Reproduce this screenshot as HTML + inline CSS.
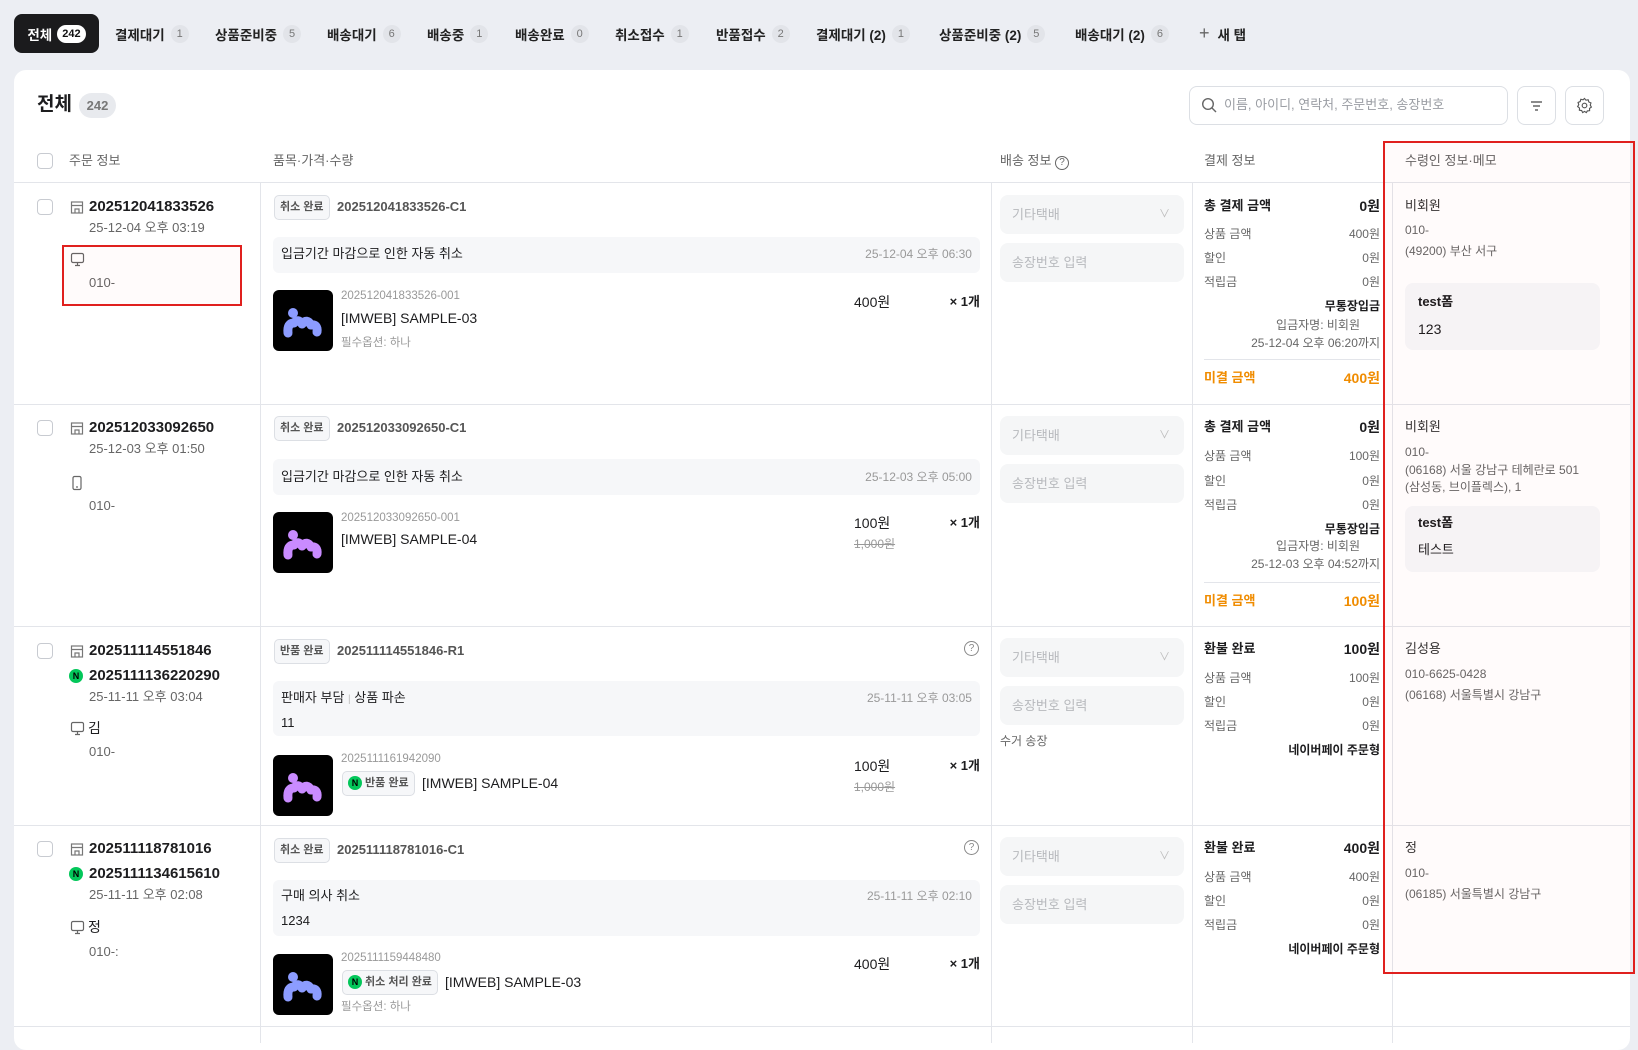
<!DOCTYPE html>
<html><head><meta charset="utf-8"><style>
*{box-sizing:border-box;margin:0;padding:0}
body{width:1638px;height:1030px;overflow:hidden;background:#eceef3;font-family:"Liberation Sans","Noto Sans CJK KR",sans-serif;color:#1d1d1f;position:relative}
.a{position:absolute;white-space:nowrap;line-height:20px}
.tab{position:absolute;top:14px;height:39px;display:flex;align-items:center;font-size:13.5px;font-weight:700;color:#222}
.cnt{display:inline-block;margin-left:6px;min-width:18px;height:18px;border-radius:9px;background:#e2e4e9;color:#777;font-size:11px;font-weight:400;text-align:center;line-height:18px;padding:0 5px}
.card{position:absolute;left:14px;top:70px;width:1616px;height:980px;background:#fff;border-radius:12px}
.hl{position:absolute;height:1px;background:#e3e5ea;left:14px;width:1616px}
.vl{position:absolute;width:1px;background:#e3e5ea;top:183px;height:860px}
.cb{position:absolute;width:16px;height:16px;border:1.5px solid #c8cbd1;border-radius:4px;background:#fff}
.g{color:#666}.lg{color:#999}
.s13{font-size:13px}.s12{font-size:12px}.s11{font-size:11.5px}.s14{font-size:14px}
.b{font-weight:700}
.badge{position:absolute;height:25px;border:1px solid #dcdfe4;background:#f6f7f9;border-radius:5px;font-size:11px;font-weight:700;color:#555;line-height:23px;padding:0 5px;white-space:nowrap}
.rbox{position:absolute;left:273px;width:707px;background:#f6f7f9;border-radius:6px}
.thumb{position:absolute;left:273px;width:60px;height:61px;background:#000;border-radius:6px;overflow:hidden}
.sel{position:absolute;left:1000px;width:184px;height:39px;background:#f5f6f7;border-radius:8px;font-size:13px;color:#b7b9bd;line-height:39px;padding-left:12px}
.r{text-align:right}
.n{display:inline-block;width:14px;height:14px;border-radius:7px;background:#03c75a;color:#000;font-size:9px;font-weight:700;text-align:center;line-height:14px;vertical-align:middle}
.memo{position:absolute;left:1405px;width:195px;background:#f6f7f9;border-radius:8px}
.or{color:#f08c00}
.ic{position:absolute}
</style></head><body>

<div class="tab" style="left:14px;width:85px;background:#1b1b1d;border-radius:8px;color:#fff;justify-content:center">전체<span class="cnt" style="background:#fff;color:#111;font-weight:700;margin-left:5px">242</span></div>
<div class="tab" style="left:115px">결제대기<span class="cnt">1</span></div>
<div class="tab" style="left:215px">상품준비중<span class="cnt">5</span></div>
<div class="tab" style="left:327px">배송대기<span class="cnt">6</span></div>
<div class="tab" style="left:427px">배송중<span class="cnt">1</span></div>
<div class="tab" style="left:515px">배송완료<span class="cnt">0</span></div>
<div class="tab" style="left:615px">취소접수<span class="cnt">1</span></div>
<div class="tab" style="left:716px">반품접수<span class="cnt">2</span></div>
<div class="tab" style="left:816px">결제대기 (2)<span class="cnt">1</span></div>
<div class="tab" style="left:939px">상품준비중 (2)<span class="cnt">5</span></div>
<div class="tab" style="left:1075px">배송대기 (2)<span class="cnt">6</span></div>
<div class="tab" style="left:1199px;font-weight:700"><span style="font-size:18px;font-weight:400;color:#666;margin-right:8px">+</span>새 탭</div>

<div class="card"></div>
<div class="a b" style="left:37px;top:93px;font-size:19px;line-height:24px">전체</div>
<div class="a" style="left:79px;top:93px;width:37px;height:25px;border-radius:13px;background:#e8eaee;color:#777;font-size:13px;line-height:25px;text-align:center;font-weight:700">242</div>

<div class="a" style="left:1189px;top:86px;width:319px;height:39px;border:1px solid #dcdfe4;border-radius:8px"></div>
<svg class="ic" style="left:1201px;top:97px" width="17" height="17" viewBox="0 0 17 17"><circle cx="7" cy="7" r="5.3" fill="none" stroke="#666" stroke-width="1.4"/><path d="M11 11l4 4" stroke="#666" stroke-width="1.4"/></svg>
<div class="a s13" style="left:1224px;top:95px;color:#9a9da3">이름, 아이디, 연락처, 주문번호, 송장번호</div>
<div class="a" style="left:1517px;top:86px;width:39px;height:39px;border:1px solid #dcdfe4;border-radius:8px"></div>
<svg class="ic" style="left:1528px;top:97px" width="17" height="17"><path d="M3 5h11M5 9h7M7 13h3" stroke="#666" stroke-width="1.4"/></svg>
<div class="a" style="left:1565px;top:86px;width:39px;height:39px;border:1px solid #dcdfe4;border-radius:8px"></div>
<svg class="ic" style="left:1576px;top:97px" width="17" height="17" viewBox="0 0 24 24"><path d="M12 2l2 2.5 3.2-.6.9 3.1 3 1.3-1 3.1 1.6 2.8-2.6 1.9.1 3.2-3.2.4L14.6 22 12 20.3 9.4 22l-1.4-2.9-3.2-.4.1-3.2L2.3 13.6l1.6-2.8-1-3.1 3-1.3.9-3.1 3.2.6z" fill="none" stroke="#555" stroke-width="1.6"/><circle cx="12" cy="12" r="3.3" fill="none" stroke="#555" stroke-width="1.6"/></svg>

<div class="cb" style="left:37px;top:153px"></div>
<div class="a s13 g" style="left:69px;top:151px">주문 정보</div>
<div class="a s13 g" style="left:273px;top:151px">품목·가격·수량</div>
<div class="a s13 g" style="left:1000px;top:151px">배송 정보 <span style="display:inline-block;width:14px;height:14px;border:1.3px solid #666;border-radius:50%;font-size:10px;line-height:12px;text-align:center;vertical-align:0px">?</span></div>
<div class="a s13 g" style="left:1204px;top:151px">결제 정보</div>
<div class="a s13 g" style="left:1405px;top:151px">수령인 정보·메모</div>

<div class="hl" style="top:182px"></div>
<div class="hl" style="top:404px"></div>
<div class="hl" style="top:626px"></div>
<div class="hl" style="top:825px"></div>
<div class="hl" style="top:1026px"></div>
<div class="vl" style="left:260px"></div>
<div class="vl" style="left:991px"></div>
<div class="vl" style="left:1192px"></div>
<div class="vl" style="left:1392px"></div>

<!-- ROW 1 -->
<div style="position:absolute;left:0;top:183px;width:1638px">
<div class="cb" style="left:37px;top:16px"></div>
<svg class="ic" style="left:70px;top:17px" width="14" height="14"><rect x="1.5" y="2" width="11" height="11" fill="none" stroke="#777" stroke-width="1.2"/><path d="M1.5 5.5h11M5 13V9h4v4" stroke="#777" stroke-width="1.2" fill="none"/></svg>
<div class="a b" style="left:89px;top:14px;font-size:15px">202512041833526</div>
<div class="a s13 g" style="left:89px;top:35px">25-12-04 오후 03:19</div>
<svg class="ic" style="left:70px;top:69px" width="15" height="15"><rect x="1.5" y="1.5" width="12" height="9" rx="1.5" fill="none" stroke="#666" stroke-width="1.2"/><path d="M7.5 10.5v3M5 13.5h5" stroke="#666" stroke-width="1.2"/></svg>
<div class="a s13 g" style="left:89px;top:90px">010-</div>

<div class="badge" style="left:274px;top:12px">취소 완료</div>
<div class="a s13" style="left:337px;top:14px;color:#555;font-weight:700">202512041833526-C1</div>
<div class="rbox" style="top:54px;height:36px"></div>
<div class="a s13" style="left:281px;top:61px">입금기간 마감으로 인한 자동 취소</div>
<div class="a s12 lg r" style="left:780px;width:192px;top:61px">25-12-04 오후 06:30</div>
<div class="thumb" style="top:107px"><svg width="60" height="61"><circle cx="20" cy="23" r="5" fill="#8c9cff"/><path d="M15 43Q14 33 21 33Q25 28 29 34Q34 28 38 35Q45 34 44 42" stroke="#8c9cff" stroke-width="9" fill="none" stroke-linecap="round" stroke-linejoin="round"/></svg></div>
<div class="a s11 lg" style="left:341px;top:103px">202512041833526-001</div>
<div class="a s14" style="left:341px;top:125px">[IMWEB] SAMPLE-03</div>
<div class="a s11 lg" style="left:341px;top:150px">필수옵션: 하나</div>
<div class="a s14" style="left:854px;top:109px">400원</div>
<div class="a s13 b r" style="left:900px;width:80px;top:109px">× 1개</div>

<div class="sel" style="top:12px">기타택배<span style="position:absolute;right:14px;color:#bbb;font-size:11px">∨</span></div>
<div class="sel" style="top:60px">송장번호 입력</div>

<div class="a s13 b" style="left:1204px;top:13px">총 결제 금액</div><div class="a s14 b r" style="left:1280px;width:100px;top:13px">0원</div>
<div class="a s12 g" style="left:1204px;top:41px">상품 금액</div><div class="a s12 g r" style="left:1280px;width:100px;top:41px">400원</div>
<div class="a s12 g" style="left:1204px;top:65px">할인</div><div class="a s12 g r" style="left:1280px;width:100px;top:65px">0원</div>
<div class="a s12 g" style="left:1204px;top:89px">적립금</div><div class="a s12 g r" style="left:1280px;width:100px;top:89px">0원</div>
<div class="a s12 b r" style="left:1230px;width:150px;top:113px">무통장입금</div>
<div class="a s12 g r" style="left:1230px;width:130px;top:132px">입금자명: 비회원</div>
<div class="a s12 g r" style="left:1200px;width:180px;top:150px">25-12-04 오후 06:20까지</div>
<div class="a" style="left:1204px;top:176px;width:176px;height:1px;background:#e3e5ea"></div>
<div class="a s13 b or" style="left:1204px;top:185px">미결 금액</div><div class="a s14 b or r" style="left:1280px;width:100px;top:185px">400원</div>

<div class="a s13" style="left:1405px;top:13px;color:#333">비회원</div>
<div class="a s12 g" style="left:1405px;top:37px">010-</div>
<div class="a s12 g" style="left:1405px;top:58px">(49200) 부산 서구</div>
<div class="memo" style="top:100px;height:67px"></div>
<div class="a s13 b" style="left:1418px;top:109px">test폼</div>
<div class="a s14" style="left:1418px;top:136px">123</div>
</div>

<!-- ROW 2 -->
<div style="position:absolute;left:0;top:404px;width:1638px">
<div class="cb" style="left:37px;top:16px"></div>
<svg class="ic" style="left:70px;top:17px" width="14" height="14"><rect x="1.5" y="2" width="11" height="11" fill="none" stroke="#777" stroke-width="1.2"/><path d="M1.5 5.5h11M5 13V9h4v4" stroke="#777" stroke-width="1.2" fill="none"/></svg>
<div class="a b" style="left:89px;top:14px;font-size:15px">202512033092650</div>
<div class="a s13 g" style="left:89px;top:35px">25-12-03 오후 01:50</div>
<svg class="ic" style="left:70px;top:71px" width="14" height="16"><rect x="3" y="1.5" width="8" height="13" rx="1.5" fill="none" stroke="#666" stroke-width="1.2"/><path d="M6 12h2" stroke="#666" stroke-width="1.2"/></svg>
<div class="a s13 g" style="left:89px;top:92px">010-</div>

<div class="badge" style="left:274px;top:12px">취소 완료</div>
<div class="a s13" style="left:337px;top:14px;color:#555;font-weight:700">202512033092650-C1</div>
<div class="rbox" style="top:55px;height:36px"></div>
<div class="a s13" style="left:281px;top:63px">입금기간 마감으로 인한 자동 취소</div>
<div class="a s12 lg r" style="left:780px;width:192px;top:63px">25-12-03 오후 05:00</div>
<div class="thumb" style="top:108px"><svg width="60" height="61"><circle cx="20" cy="23" r="5" fill="#c98bff"/><path d="M15 43Q14 33 21 33Q25 28 29 34Q34 28 38 35Q45 34 44 42" stroke="#c98bff" stroke-width="9" fill="none" stroke-linecap="round" stroke-linejoin="round"/></svg></div>
<div class="a s11 lg" style="left:341px;top:104px">202512033092650-001</div>
<div class="a s14" style="left:341px;top:125px">[IMWEB] SAMPLE-04</div>
<div class="a s14" style="left:854px;top:109px">100원</div>
<div class="a s12 lg" style="left:854px;top:130px;text-decoration:line-through">1,000원</div>
<div class="a s13 b r" style="left:900px;width:80px;top:109px">× 1개</div>

<div class="sel" style="top:12px">기타택배<span style="position:absolute;right:14px;color:#bbb;font-size:11px">∨</span></div>
<div class="sel" style="top:60px">송장번호 입력</div>

<div class="a s13 b" style="left:1204px;top:13px">총 결제 금액</div><div class="a s14 b r" style="left:1280px;width:100px;top:13px">0원</div>
<div class="a s12 g" style="left:1204px;top:42px">상품 금액</div><div class="a s12 g r" style="left:1280px;width:100px;top:42px">100원</div>
<div class="a s12 g" style="left:1204px;top:67px">할인</div><div class="a s12 g r" style="left:1280px;width:100px;top:67px">0원</div>
<div class="a s12 g" style="left:1204px;top:91px">적립금</div><div class="a s12 g r" style="left:1280px;width:100px;top:91px">0원</div>
<div class="a s12 b r" style="left:1230px;width:150px;top:115px">무통장입금</div>
<div class="a s12 g r" style="left:1230px;width:130px;top:132px">입금자명: 비회원</div>
<div class="a s12 g r" style="left:1200px;width:180px;top:150px">25-12-03 오후 04:52까지</div>
<div class="a" style="left:1204px;top:178px;width:176px;height:1px;background:#e3e5ea"></div>
<div class="a s13 b or" style="left:1204px;top:187px">미결 금액</div><div class="a s14 b or r" style="left:1280px;width:100px;top:187px">100원</div>

<div class="a s13" style="left:1405px;top:13px;color:#333">비회원</div>
<div class="a s12 g" style="left:1405px;top:38px">010-</div>
<div class="a s12 g" style="left:1405px;top:58px;white-space:normal;word-break:break-all;width:186px;line-height:17px">(06168) 서울 강남구 테헤란로 501 (삼성동, 브이플렉스), 1</div>
<div class="memo" style="top:102px;height:66px"></div>
<div class="a s13 b" style="left:1418px;top:109px">test폼</div>
<div class="a s13" style="left:1418px;top:136px">테스트</div>
</div>

<!-- ROW 3 -->
<div style="position:absolute;left:0;top:626px;width:1638px">
<div class="cb" style="left:37px;top:17px"></div>
<svg class="ic" style="left:70px;top:18px" width="14" height="14"><rect x="1.5" y="2" width="11" height="11" fill="none" stroke="#777" stroke-width="1.2"/><path d="M1.5 5.5h11M5 13V9h4v4" stroke="#777" stroke-width="1.2" fill="none"/></svg>
<div class="a b" style="left:89px;top:15px;font-size:15px">202511114551846</div>
<div class="a" style="left:69px;top:40px"><span class="n">N</span></div>
<div class="a b" style="left:89px;top:40px;font-size:15px">2025111136220290</div>
<div class="a s13 g" style="left:89px;top:61px">25-11-11 오후 03:04</div>
<svg class="ic" style="left:70px;top:95px" width="15" height="15"><rect x="1.5" y="1.5" width="12" height="9" rx="1.5" fill="none" stroke="#666" stroke-width="1.2"/><path d="M7.5 10.5v3M5 13.5h5" stroke="#666" stroke-width="1.2"/></svg>
<div class="a s14" style="left:88px;top:92px">김</div>
<div class="a s13 g" style="left:89px;top:116px">010-</div>

<div class="badge" style="left:274px;top:13px">반품 완료</div>
<div class="a s13" style="left:337px;top:15px;color:#555;font-weight:700">202511114551846-R1</div>
<div class="a" style="left:964px;top:15px;width:15px;height:15px;border:1.2px solid #888;border-radius:50%;font-size:10px;line-height:13px;text-align:center;color:#888">?</div>
<div class="rbox" style="top:55px;height:55px"></div>
<div class="a s13" style="left:281px;top:62px">판매자 부담 <span style="color:#bbb;font-size:10px">|</span> 상품 파손</div>
<div class="a s13" style="left:281px;top:87px">11</div>
<div class="a s12 lg r" style="left:780px;width:192px;top:62px">25-11-11 오후 03:05</div>
<div class="thumb" style="top:129px"><svg width="60" height="61"><circle cx="20" cy="23" r="5" fill="#c98bff"/><path d="M15 43Q14 33 21 33Q25 28 29 34Q34 28 38 35Q45 34 44 42" stroke="#c98bff" stroke-width="9" fill="none" stroke-linecap="round" stroke-linejoin="round"/></svg></div>
<div class="a s11 lg" style="left:341px;top:123px">2025111161942090</div>
<div class="badge" style="left:342px;top:145px"><span class="n">N</span> 반품 완료</div>
<div class="a s14" style="left:422px;top:147px">[IMWEB] SAMPLE-04</div>
<div class="a s14" style="left:854px;top:130px">100원</div>
<div class="a s12 lg" style="left:854px;top:151px;text-decoration:line-through">1,000원</div>
<div class="a s13 b r" style="left:900px;width:80px;top:130px">× 1개</div>

<div class="sel" style="top:12px">기타택배<span style="position:absolute;right:14px;color:#bbb;font-size:11px">∨</span></div>
<div class="sel" style="top:60px">송장번호 입력</div>
<div class="a s12 g" style="left:1000px;top:105px">수거 송장</div>

<div class="a s13 b" style="left:1204px;top:13px">환불 완료</div><div class="a s14 b r" style="left:1280px;width:100px;top:13px">100원</div>
<div class="a s12 g" style="left:1204px;top:42px">상품 금액</div><div class="a s12 g r" style="left:1280px;width:100px;top:42px">100원</div>
<div class="a s12 g" style="left:1204px;top:66px">할인</div><div class="a s12 g r" style="left:1280px;width:100px;top:66px">0원</div>
<div class="a s12 g" style="left:1204px;top:90px">적립금</div><div class="a s12 g r" style="left:1280px;width:100px;top:90px">0원</div>
<div class="a s12 b r" style="left:1230px;width:150px;top:114px">네이버페이 주문형</div>

<div class="a s13" style="left:1405px;top:13px;color:#333">김성용</div>
<div class="a s12 g" style="left:1405px;top:38px">010-6625-0428</div>
<div class="a s12 g" style="left:1405px;top:59px">(06168) 서울특별시 강남구</div>
</div>

<!-- ROW 4 -->
<div style="position:absolute;left:0;top:825px;width:1638px">
<div class="cb" style="left:37px;top:16px"></div>
<svg class="ic" style="left:70px;top:17px" width="14" height="14"><rect x="1.5" y="2" width="11" height="11" fill="none" stroke="#777" stroke-width="1.2"/><path d="M1.5 5.5h11M5 13V9h4v4" stroke="#777" stroke-width="1.2" fill="none"/></svg>
<div class="a b" style="left:89px;top:14px;font-size:15px">202511118781016</div>
<div class="a" style="left:69px;top:39px"><span class="n">N</span></div>
<div class="a b" style="left:89px;top:39px;font-size:15px">2025111134615610</div>
<div class="a s13 g" style="left:89px;top:60px">25-11-11 오후 02:08</div>
<svg class="ic" style="left:70px;top:95px" width="15" height="15"><rect x="1.5" y="1.5" width="12" height="9" rx="1.5" fill="none" stroke="#666" stroke-width="1.2"/><path d="M7.5 10.5v3M5 13.5h5" stroke="#666" stroke-width="1.2"/></svg>
<div class="a s14" style="left:88px;top:92px">정</div>
<div class="a s13 g" style="left:89px;top:117px">010-:</div>

<div class="badge" style="left:274px;top:13px">취소 완료</div>
<div class="a s13" style="left:337px;top:15px;color:#555;font-weight:700">202511118781016-C1</div>
<div class="a" style="left:964px;top:15px;width:15px;height:15px;border:1.2px solid #888;border-radius:50%;font-size:10px;line-height:13px;text-align:center;color:#888">?</div>
<div class="rbox" style="top:55px;height:56px"></div>
<div class="a s13" style="left:281px;top:61px">구매 의사 취소</div>
<div class="a s13" style="left:281px;top:86px">1234</div>
<div class="a s12 lg r" style="left:780px;width:192px;top:61px">25-11-11 오후 02:10</div>
<div class="thumb" style="top:129px"><svg width="60" height="61"><circle cx="20" cy="23" r="5" fill="#8c9cff"/><path d="M15 43Q14 33 21 33Q25 28 29 34Q34 28 38 35Q45 34 44 42" stroke="#8c9cff" stroke-width="9" fill="none" stroke-linecap="round" stroke-linejoin="round"/></svg></div>
<div class="a s11 lg" style="left:341px;top:123px">2025111159448480</div>
<div class="badge" style="left:342px;top:145px"><span class="n">N</span> 취소 처리 완료</div>
<div class="a s14" style="left:445px;top:147px">[IMWEB] SAMPLE-03</div>
<div class="a s11 lg" style="left:341px;top:172px">필수옵션: 하나</div>
<div class="a s14" style="left:854px;top:129px">400원</div>
<div class="a s13 b r" style="left:900px;width:80px;top:129px">× 1개</div>

<div class="sel" style="top:12px">기타택배<span style="position:absolute;right:14px;color:#bbb;font-size:11px">∨</span></div>
<div class="sel" style="top:60px">송장번호 입력</div>

<div class="a s13 b" style="left:1204px;top:13px">환불 완료</div><div class="a s14 b r" style="left:1280px;width:100px;top:13px">400원</div>
<div class="a s12 g" style="left:1204px;top:42px">상품 금액</div><div class="a s12 g r" style="left:1280px;width:100px;top:42px">400원</div>
<div class="a s12 g" style="left:1204px;top:66px">할인</div><div class="a s12 g r" style="left:1280px;width:100px;top:66px">0원</div>
<div class="a s12 g" style="left:1204px;top:90px">적립금</div><div class="a s12 g r" style="left:1280px;width:100px;top:90px">0원</div>
<div class="a s12 b r" style="left:1230px;width:150px;top:114px">네이버페이 주문형</div>

<div class="a s13" style="left:1405px;top:13px;color:#333">정</div>
<div class="a s12 g" style="left:1405px;top:38px">010-</div>
<div class="a s12 g" style="left:1405px;top:59px">(06185) 서울특별시 강남구</div>
</div>

<div class="a" style="left:62px;top:245px;width:180px;height:61px;border:2px solid #e0201e;background:rgba(255,0,0,0.015)"></div>
<div class="a" style="left:1383px;top:141px;width:252px;height:833px;border:2px solid #e0201e;background:rgba(255,0,0,0.015)"></div>
</body></html>
